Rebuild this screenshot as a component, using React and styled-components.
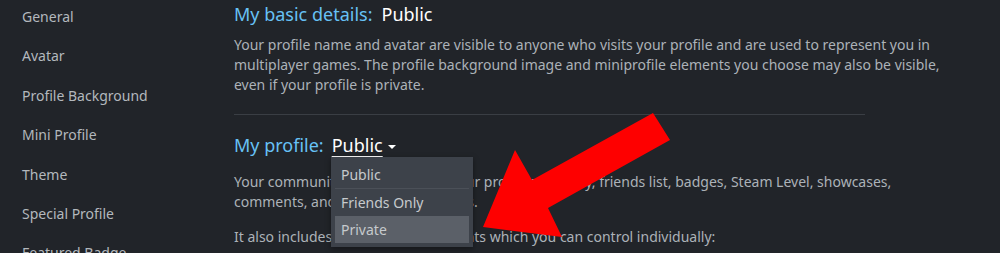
import React from "react";
import styled, { createGlobalStyle } from "styled-components";

const Global = createGlobalStyle`
  html, body { margin: 0; padding: 0; background: #212429; }
  body { font-family: "Noto Sans", "Open Sans", Arial, sans-serif; overflow: hidden; }
`;

const Page = styled.div`
  position: relative;
  display: flex;
  width: 1000px;
  height: 253px;
  overflow: hidden;
  background: #212429;
`;

const Sidebar = styled.nav`
  width: 234px;
  flex: none;
  padding: 7px 0 0 22px;
  box-sizing: border-box;
  display: flex;
  flex-direction: column;
  gap: 19.4px;
`;

const NavItem = styled.div`
  font-size: 14px;
  line-height: 20px;
  color: #b3b8bd;
  white-space: nowrap;
`;

const Main = styled.main`
  width: 716px;
  flex: none;
  padding-top: 2px;
`;

const Heading = styled.div`
  position: relative;
  display: flex;
  align-items: center;
  gap: 9px;
  font-size: 18px;
  line-height: 24px;
  color: #67c1f5;
  margin-top: ${(p) => p.$top || 0}px;
`;

const Value = styled.span`
  color: #ffffff;
  text-decoration: ${(p) => (p.$link ? "underline" : "none")};
  text-underline-offset: 4px;
  text-decoration-thickness: 1px;
  margin-left: ${(p) => (p.$link ? -1 : 0)}px;
`;

const Caret = styled.span`
  width: 0;
  height: 0;
  border-left: 4px solid transparent;
  border-right: 4px solid transparent;
  border-top: 4px solid #ffffff;
  margin-left: -4px;
  margin-top: 3px;
`;

const Para = styled.p`
  margin: ${(p) => p.$top || 0}px 0 0;
  font-size: 14px;
  line-height: 20px;
  color: #acb2b8;
`;

const Divider = styled.hr`
  width: 631px;
  margin: 19px 0 0;
  border: none;
  border-top: 1px solid #3a3e44;
  height: 0;
`;

const Menu = styled.div`
  position: absolute;
  left: 97px;
  top: 24px;
  width: 142px;
  padding: 5px 4px 4px;
  box-sizing: border-box;
  background: #3d424a;
  box-shadow: 0 2px 6px rgba(0, 0, 0, 0.4);
  display: flex;
  flex-direction: column;
  z-index: 2;
`;

const MenuItem = styled.div`
  height: 27px;
  padding-left: 6px;
  display: flex;
  align-items: center;
  font-size: 14px;
  color: #c6cacd;
  background: ${(p) => (p.$active ? "#5b6068" : "transparent")};
  border-bottom: ${(p) => (p.$sep ? "1px solid #4b5058" : "none")};
  box-sizing: border-box;
`;

const Annotation = styled.svg`
  position: absolute;
  left: 0;
  top: 0;
  pointer-events: none;
  z-index: 3;
`;

export default function App() {
  const nav = [
    "General",
    "Avatar",
    "Profile Background",
    "Mini Profile",
    "Theme",
    "Special Profile",
    "Featured Badge",
  ];
  return (
    <Page>
      <Global />
      <Sidebar>
        {nav.map((n) => (
          <NavItem key={n}>{n}</NavItem>
        ))}
      </Sidebar>
      <Main>
        <Heading>
          My basic details:
          <Value>Public</Value>
        </Heading>
        <Para $top={9}>
          Your profile name and avatar are visible to anyone who visits your profile and are used to represent you in
          multiplayer games. The profile background image and miniprofile elements you choose may also be visible,
          even if your profile is private.
        </Para>
        <Divider />
        <Heading $top={18}>
          My profile:
          <Value $link>Public</Value>
          <Caret />
          <Menu>
            <MenuItem $sep>Public</MenuItem>
            <MenuItem>Friends Only</MenuItem>
            <MenuItem $active>Private</MenuItem>
          </Menu>
        </Heading>
        <Para $top={15}>
          Your community profile includes your profile summary, friends list, badges, Steam Level, showcases,
          comments, and group memberships.
        </Para>
        <Para $top={15}>
          It also includes several other elements which you can control individually:
        </Para>
      </Main>
      <Annotation width="1000" height="253" viewBox="0 0 1000 253">
        <polygon
          points="483,227 515,150 532,180 653,113 670,140 548,208 562,237"
          fill="#fe0000"
        />
      </Annotation>
    </Page>
  );
}
